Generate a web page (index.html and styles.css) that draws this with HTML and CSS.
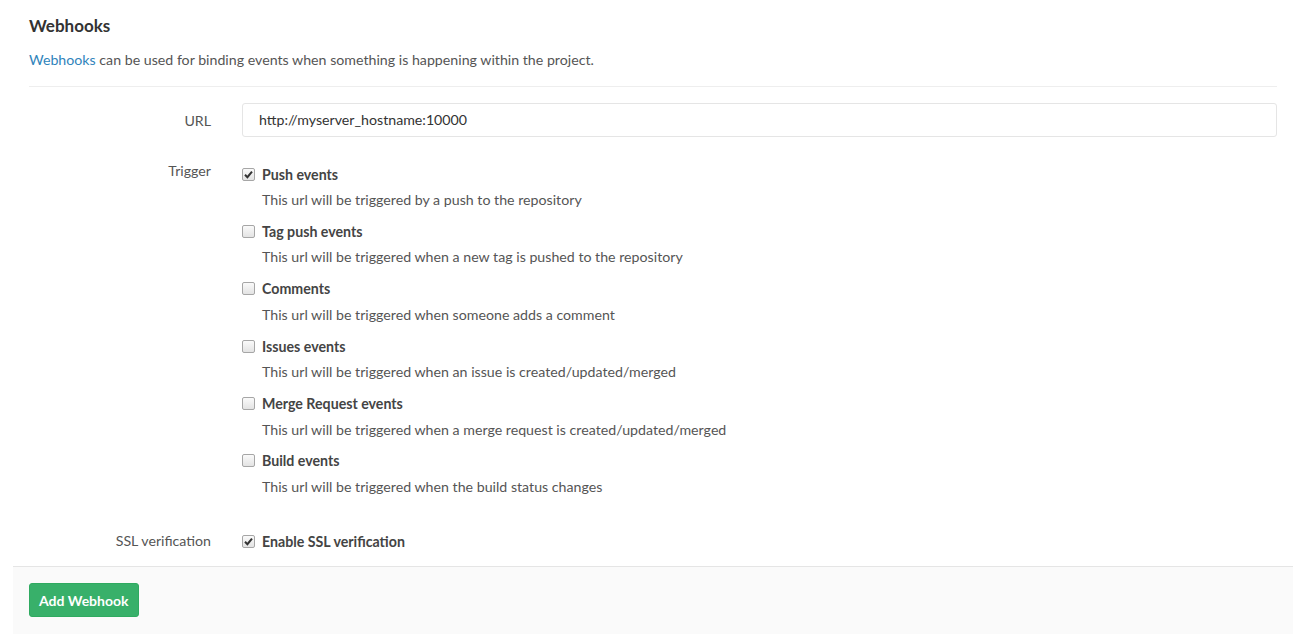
FILE: index.html
```html
<!DOCTYPE html>
<html>
<head>
<meta charset="utf-8">
<link rel="stylesheet" href="styles.css">
</head>
<body>
<div class="page">
  <h3 class="title">Webhooks</h3>
  <p class="intro"><a href="#">Webhooks</a> can be used for binding events when something is happening within the project.</p>
  <hr class="sep">
  <form class="form">
    <div class="row row-url">
      <label class="lbl">URL</label>
      <div class="field"><div class="input">http://myserver_hostname:10000</div></div>
    </div>
    <div class="row row-trigger">
      <label class="lbl">Trigger</label>
      <div class="field">
        <div class="opt">
          <div class="opt-head"><span class="cb checked"><svg viewBox="0 0 13 13" width="13" height="13"><path d="M3 6.8 L5.4 9.2 L10 3.6" fill="none" stroke="#333" stroke-width="2"/></svg></span><strong>Push events</strong></div>
          <p class="desc">This url will be triggered by a push to the repository</p>
        </div>
        <div class="opt">
          <div class="opt-head"><span class="cb"></span><strong>Tag push events</strong></div>
          <p class="desc">This url will be triggered when a new tag is pushed to the repository</p>
        </div>
        <div class="opt">
          <div class="opt-head"><span class="cb"></span><strong>Comments</strong></div>
          <p class="desc">This url will be triggered when someone adds a comment</p>
        </div>
        <div class="opt">
          <div class="opt-head"><span class="cb"></span><strong>Issues events</strong></div>
          <p class="desc">This url will be triggered when an issue is created/updated/merged</p>
        </div>
        <div class="opt">
          <div class="opt-head"><span class="cb"></span><strong>Merge Request events</strong></div>
          <p class="desc">This url will be triggered when a merge request is created/updated/merged</p>
        </div>
        <div class="opt">
          <div class="opt-head"><span class="cb"></span><strong>Build events</strong></div>
          <p class="desc">This url will be triggered when the build status changes</p>
        </div>
      </div>
    </div>
    <div class="row row-ssl">
      <label class="lbl">SSL verification</label>
      <div class="field">
        <div class="opt-head"><span class="cb checked"><svg viewBox="0 0 13 13" width="13" height="13"><path d="M3 6.8 L5.4 9.2 L10 3.6" fill="none" stroke="#333" stroke-width="2"/></svg></span><strong>Enable SSL verification</strong></div>
      </div>
    </div>
    <div class="actions">
      <button type="button" class="btn-create">Add Webhook</button>
    </div>
  </form>
</div>
</body>
</html>
```
FILE: styles.css
```css
* { box-sizing: border-box; }
html, body { margin: 0; padding: 0; background: #fff; }
body {
  font-family: Lato, "Open Sans", sans-serif;
  font-size: 14.2px;
  color: #555;
}
.page {
  padding: 0 12px 0 13px;
  width: 1305px;
}
.title {
  margin: 0;
  padding: 15px 16px 0;
  font-size: 17px;
  line-height: 22px;
  font-weight: 700;
  color: #333;
}
.intro {
  margin: 13px 0 0;
  padding: 0 16px;
  line-height: 20px;
  color: #555;
}
.intro a { color: #3084bb; text-decoration: none; }
.sep {
  margin: 16px 16px 0;
  border: 0;
  border-top: 1px solid #eee;
  height: 0;
}
.form { margin-top: 16px; }
.row {
  display: grid;
  grid-template-columns: 182px 1fr;
  column-gap: 31px;
  padding: 0 16px;
}
.lbl {
  text-align: right;
  line-height: 20px;
  color: #555;
}
.row-url .lbl { padding-top: 8px; }
.input {
  height: 34px;
  border: 1px solid #e5e5e5;
  border-radius: 3px;
  padding: 0 16px;
  line-height: 32px;
  color: #333;
}
.row-trigger { margin-top: 27px; }
.row-trigger .lbl { margin-top: -3px; }
.opt { margin-bottom: 11.4px; }
.opt-head {
  display: flex;
  align-items: center;
  height: 20px;
}
.opt-head strong { font-weight: 700; color: #444; margin-left: 7px; }
.cb {
  display: inline-flex;
  flex: none;
  width: 13px;
  height: 13px;
  border: 1px solid #a6a6a6;
  border-radius: 2px;
  background: linear-gradient(#fafafa, #e3e3e3);
}
.cb svg { display: block; margin: -1px; }
.desc {
  margin: 6px 0 0 20px;
  line-height: 20px;
  color: #555;
}
.row-ssl { margin-top: 23px; }
.actions {
  margin-top: 15px;
  background: #fafafa;
  border-top: 1px solid #e5e5e5;
  padding: 16px;
  height: 68px;
}
.btn-create {
  display: block;
  height: 34px;
  padding: 0 9px;
  background: #38b06a;
  border: 1px solid #2faa60;
  border-radius: 3px;
  color: #fff;
  font-family: Lato, "Open Sans", sans-serif;
  font-size: 14px;
  font-weight: 700;
}
```
